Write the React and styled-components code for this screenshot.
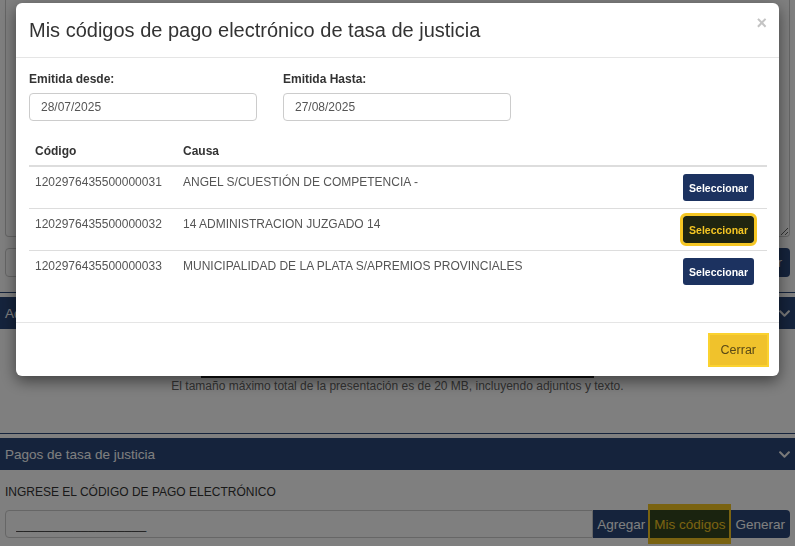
import React from 'react'
import styled, { createGlobalStyle, css } from 'styled-components'
import { FaChevronDown } from 'react-icons/fa'

const GlobalStyle = createGlobalStyle`
  html, body {
    margin: 0;
    padding: 0;
    background: #ffffff;
    font-family: 'Liberation Sans', Arial, sans-serif;
    color: #333;
  }
  body {
    height: 546px;
    overflow: hidden;
  }
  * { box-sizing: border-box; }
`

const rows = [
  { id: 1, code: '1202976435500000031', causa: 'ANGEL S/CUESTIÓN DE COMPETENCIA -' },
  { id: 2, code: '1202976435500000032', causa: '14 ADMINISTRACION JUZGADO 14', focused: true },
  { id: 3, code: '1202976435500000033', causa: 'MUNICIPALIDAD DE LA PLATA S/APREMIOS PROVINCIALES' },
]

function App() {
  return (
    <>
      <GlobalStyle />
      <Page>
        <TextBox defaultValue="" />
        <SearchRow>
          <SearchInput />
          <NavyButton>Buscar</NavyButton>
        </SearchRow>

        <Panel>
          <PanelHeader>
            <span>Adjuntos</span>
            <FaChevronDown />
          </PanelHeader>
          <PanelBody $center>
            <DropZone />
            <Note>El tamaño máximo total de la presentación es de 20 MB, incluyendo adjuntos y texto.</Note>
          </PanelBody>
        </Panel>

        <Panel>
          <PanelHeader>
            <span>Pagos de tasa de justicia</span>
            <FaChevronDown />
          </PanelHeader>
          <PanelBody>
            <FieldLabel>INGRESE EL CÓDIGO DE PAGO ELECTRÓNICO</FieldLabel>
            <InputGroup>
              <CodeInput placeholder="__________________" />
              <GroupButton>Agregar</GroupButton>
              <GroupButton $focused>Mis códigos</GroupButton>
              <GroupButton>Generar</GroupButton>
            </InputGroup>
          </PanelBody>
        </Panel>
      </Page>

      <Backdrop>
        <Dialog>
          <DialogHeader>
            <DialogTitle>Mis códigos de pago electrónico de tasa de justicia</DialogTitle>
            <CloseButton>×</CloseButton>
          </DialogHeader>

          <DialogBody>
            <DateGrid>
              <Field>
                <Label>Emitida desde:</Label>
                <DateInput defaultValue="28/07/2025" />
              </Field>
              <Field>
                <Label>Emitida Hasta:</Label>
                <DateInput defaultValue="27/08/2025" />
              </Field>
            </DateGrid>

            <CodesTable>
              <thead>
                <tr>
                  <th style={{ width: 148 }}>Código</th>
                  <th>Causa</th>
                  <th></th>
                </tr>
              </thead>
              <tbody>
                {rows.map((row) => (
                  <tr key={row.id}>
                    <td>{row.code}</td>
                    <td>{row.causa}</td>
                    <ActionCell>
                      <SelectButton $focused={row.focused}>Seleccionar</SelectButton>
                    </ActionCell>
                  </tr>
                ))}
              </tbody>
            </CodesTable>
          </DialogBody>

          <DialogFooter>
            <CloseAction>Cerrar</CloseAction>
          </DialogFooter>
        </Dialog>
      </Backdrop>
    </>
  )
}

const navy = '#2a4779'
const modalNavy = '#1c3260'
const yellow = '#f5c623'

const Page = styled.div`
  padding: 0 5px;
  display: flex;
  flex-direction: column;
`

const TextBox = styled.textarea`
  display: block;
  width: 100%;
  height: 237px;
  border: 1px solid #ccc;
  border-top: none;
  border-radius: 0 0 4px 4px;
  background: #fff;
  resize: vertical;
`

const SearchRow = styled.div`
  display: flex;
  margin-top: 11px;
  height: 29px;
`

const SearchInput = styled.input`
  flex: 1;
  border: 1px solid #ccc;
  border-radius: 4px 0 0 4px;
  background: #fff;
`

const NavyButton = styled.button`
  background: ${navy};
  color: #fff;
  border: none;
  border-radius: 0 4px 4px 0;
  font-family: inherit;
  font-size: 13.5px;
  padding: 0 8px;
`

const Panel = styled.section`
  margin-top: 15px;
  border-top: 1px solid ${navy};
  padding-top: 4px;
  margin-left: -5px;
  margin-right: -5px;
  & + & {
    margin-top: 0;
  }
`

const PanelHeader = styled.div`
  height: 32px;
  background: ${navy};
  color: #fff;
  font-size: 13.5px;
  display: flex;
  align-items: center;
  justify-content: space-between;
  padding: 0 4px 0 5px;

  svg {
    font-size: 13px;
    color: #f2f2f2;
  }
`

const PanelBody = styled.div`
  padding: 0 5px;
  display: flex;
  flex-direction: column;
  ${(p) =>
    p.$center &&
    css`
      align-items: center;
      padding-bottom: 40px;
    `}
`

const DropZone = styled.div`
  width: 393px;
  height: 41px;
  margin-top: 8px;
  border-bottom: 2px solid #222;
`

const Note = styled.p`
  margin: 1px 0 0;
  font-size: 12px;
  line-height: 14px;
  color: #666;
`

const FieldLabel = styled.div`
  margin-top: 14px;
  font-size: 12px;
  line-height: 16px;
  color: #333;
`

const InputGroup = styled.div`
  display: flex;
  margin-top: 10px;
  height: 28px;
`

const CodeInput = styled.input`
  flex: 1;
  border: 1px solid #ccc;
  border-radius: 4px 0 0 4px;
  background: #fff;
  padding: 0 10px;
  font-family: inherit;
  font-size: 13px;
  &::placeholder {
    color: #333;
  }
`

const GroupButton = styled.button`
  background: ${navy};
  color: #fff;
  border: none;
  font-family: inherit;
  font-size: 13.5px;
  padding: 0 4px;
  &:last-child {
    border-radius: 0 4px 4px 0;
    padding: 0 5px;
  }
  ${(p) =>
    p.$focused &&
    css`
      position: relative;
      margin: 0 1px;
      background: #34461e;
      color: ${yellow};
      padding: 0 4px;
      box-shadow: 0 -4px 0 2px ${yellow}, 0 4px 0 2px ${yellow};
    `}
`

const Backdrop = styled.div`
  position: fixed;
  inset: 0;
  background: rgba(0, 0, 0, 0.5);
  padding: 3px 16px 0;
`

const Dialog = styled.div`
  background: #fff;
  border-radius: 6px;
  box-shadow: 0 5px 15px rgba(0, 0, 0, 0.5);
  display: flex;
  flex-direction: column;
`

const DialogHeader = styled.div`
  display: flex;
  justify-content: space-between;
  align-items: flex-start;
  padding: 15px 12px 14px 13px;
  border-bottom: 1px solid #e5e5e5;
`

const DialogTitle = styled.h4`
  margin: 0;
  font-size: 20px;
  line-height: 25px;
  font-weight: normal;
  color: #333;
`

const CloseButton = styled.span`
  font-size: 18px;
  line-height: 14px;
  font-weight: bold;
  color: #c4c4c4;
  margin-top: -2px;
`

const DialogBody = styled.div`
  padding: 13px 12px 30px 13px;
`

const DateGrid = styled.div`
  display: grid;
  grid-template-columns: 228px 228px;
  column-gap: 26px;
`

const Field = styled.div`
  display: flex;
  flex-direction: column;
`

const Label = styled.label`
  font-size: 12px;
  line-height: 16px;
  font-weight: bold;
  color: #333;
  margin-bottom: 6px;
`

const DateInput = styled.input`
  height: 28px;
  border: 1px solid #ccc;
  border-radius: 4px;
  padding: 0 11px;
  font-family: inherit;
  font-size: 12px;
  color: #555;
`

const CodesTable = styled.table`
  width: 100%;
  margin-top: 16px;
  border-collapse: collapse;
  font-size: 12px;

  th {
    text-align: left;
    padding: 7px 6px;
    line-height: 14px;
    font-weight: bold;
    color: #333;
    border-bottom: 2px solid #ddd;
  }

  td {
    padding: 7px 6px;
    line-height: 16px;
    vertical-align: top;
    color: #555;
  }

  tbody tr + tr td {
    border-top: 1px solid #ddd;
  }
`

const ActionCell = styled.td`
  && {
    text-align: right;
    padding-right: 13px;
  }
`

const SelectButton = styled.button`
  height: 27px;
  padding: 0 6px;
  border: none;
  border-radius: 3px;
  background: ${modalNavy};
  color: #fff;
  font-family: inherit;
  font-size: 10.5px;
  font-weight: bold;
  ${(p) =>
    p.$focused &&
    css`
      background: #1f2510;
      color: ${yellow};
      outline: 3px solid ${yellow};
    `}
`

const DialogFooter = styled.div`
  border-top: 1px solid #e5e5e5;
  padding: 10px 10px 9px;
  display: flex;
  justify-content: flex-end;
`

const CloseAction = styled.button`
  height: 34px;
  padding: 0 11px;
  background: #f0c22c;
  border: 2px solid #fbd22f;
  border-radius: 0;
  color: #5a4916;
  font-family: inherit;
  font-size: 12.5px;
`

export default App
